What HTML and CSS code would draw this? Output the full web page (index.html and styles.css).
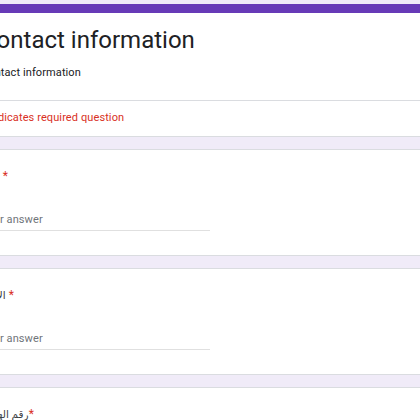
FILE: index.html
```html
<!DOCTYPE html>
<html lang="en">
<head>
<meta charset="utf-8">
<title>Contact information</title>
<link rel="stylesheet" href="styles.css">
</head>
<body>
<div class="form">
  <div class="card header-card">
    <div class="header-main">
      <div class="form-title">Contact information</div>
      <div class="form-desc">Contact information</div>
    </div>
    <div class="required-note">* Indicates required question</div>
  </div>

  <div class="card question">
    <div class="q-label"><span class="ar">اسم</span> <span class="req">*</span></div>
    <div class="answer">Your answer</div>
  </div>

  <div class="card question">
    <div class="q-label"><span class="ar">الاسم</span> <span class="req">*</span></div>
    <div class="answer">Your answer</div>
  </div>

  <div class="card question">
    <div class="q-label"><span class="ar">رقم الهاتف</span><span class="req">*</span></div>
    <div class="answer">Your answer</div>
  </div>
</div>
</body>
</html>
```

FILE: styles.css
```css
html, body {
  margin: 0;
  padding: 0;
}

body {
  background: #f0ebf8;
  font-family: Roboto, "DejaVu Sans", Arial, sans-serif;
  color: #202124;
  overflow: hidden;
}

.form {
  margin-left: -44px;
  width: 560px;
  padding-top: 4px;
  display: flex;
  flex-direction: column;
  gap: 12px;
}

.card {
  background: #fff;
  border: 1px solid #dadce0;
  border-radius: 8px;
}

.header-card {
  border-top: 9px solid #673ab7;
}

.header-main {
  padding: 11px 24px 19px;
  border-bottom: 1px solid #dadce0;
}

.form-title {
  font-size: 24px;
  line-height: 32px;
  color: #202124;
}

.form-desc {
  margin-top: 9px;
  font-size: 11px;
  line-height: 16px;
  letter-spacing: 0.1px;
  color: #202124;
}

.required-note {
  padding: 9px 24px 10px;
  font-size: 11px;
  line-height: 16px;
  letter-spacing: 0.1px;
  color: #d93025;
}

.question {
  padding: 17px 24px 24px;
}

.q-label {
  height: 18px;
  font-size: 12px;
  line-height: 18px;
  color: #202124;
}

.ar {
  font-size: 10.5px;
  line-height: 12px;
  color: #3c4043;
}

.req {
  color: #d93025;
}

.answer {
  margin-top: 27px;
  width: 229px;
  font-size: 11px;
  line-height: 16px;
  letter-spacing: 0.1px;
  padding-bottom: 2px;
  color: #70757a;
  border-bottom: 1px solid #e0e0e0;
}
```
